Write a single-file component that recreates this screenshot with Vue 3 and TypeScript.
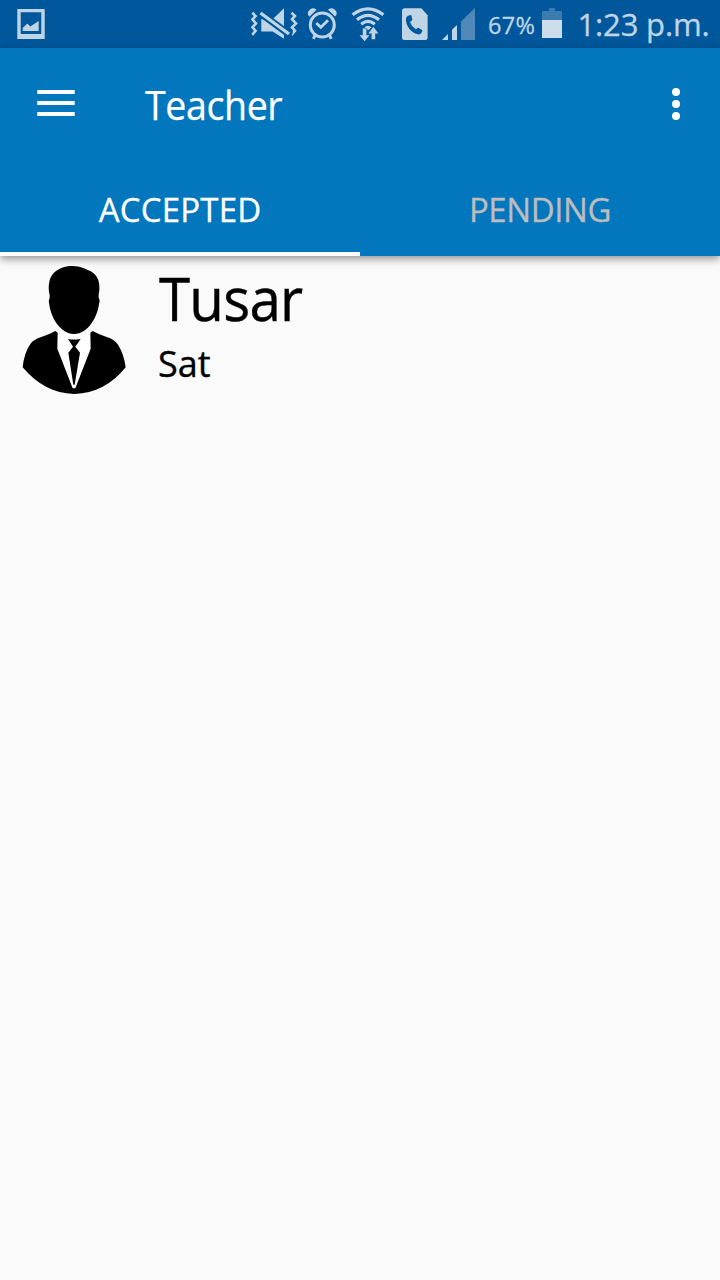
<script setup lang="ts">
import { ref } from 'vue'

interface Teacher {
  name: string
  day: string
}

const tabs: string[] = ['ACCEPTED', 'PENDING']
const active = ref<number>(0)
const teachers: Teacher[] = [{ name: 'Tusar', day: 'Sat' }]
</script>

<template>
  <div class="screen">
    <div class="status">
      <svg class="picture" width="28" height="32" viewBox="17 8 28 32">
        <path class="fg" fill-rule="evenodd" d="M17.3 9H44.7V39H17.3ZM20.7 12.3V34H41.3V12.3Z" />
        <path class="fg" d="M22.7 31V28L27.3 23.5L30.3 26.5L38.7 21V31Z" />
      </svg>
      <div class="indicators">
        <svg width="48" height="48" viewBox="250 0 48 48">
          <path class="zig" d="M252.3 12.8L255.6 16L252.5 19.4L256 23.4L252.5 27.3L255.6 30.8L252.2 34.8" />
          <path class="zig" d="M291.5 12.8L295 16L292 19.2L296 23.4L292 27.3L295 30.8L291.5 34.8" />
          <path class="fg" d="M261.3 19.3H272.6L284 8.3V38.8L272.6 31.5H261.3Z" />
          <path d="M257 10.6L291 35.6" stroke="#01579b" stroke-width="7" />
          <path d="M260.5 13L289 34" stroke="#bfd5e6" stroke-width="3.4" />
        </svg>
        <svg class="alarm" width="34" height="48" viewBox="305 0 34 48">
          <circle cx="322.3" cy="25" r="12" fill="none" stroke="#bfd5e6" stroke-width="3" />
          <path d="M316.2 23L320.8 27.3L328 20.3" fill="none" stroke="#bfd5e6" stroke-width="2.8" />
          <path class="fg" d="M309.6 16.6C305.6 13.6 309.2 8 313.4 8.2Q315.2 8.2 316.6 9.8ZM335 16.6C339 13.6 335.4 8 331.2 8.2Q329.4 8.2 328 9.8Z" />
          <path d="M315.2 35L313.4 38.8M329.4 35L331.2 38.8" stroke="#bfd5e6" stroke-width="3" />
        </svg>
        <svg class="wifi" width="34" height="48" viewBox="351 0 34 48">
          <g fill="none" stroke="#bfd5e6" stroke-width="3.2">
            <path d="M352.6 14.8Q368 2.8 383.4 14.8" />
            <path d="M357 19.8Q368 10.8 379 19.8" />
            <path d="M361.2 24.2Q368 18.6 374.8 24.2" />
          </g>
          <path class="fg" d="M364.5 27.3Q368 24.3 371.5 27.3L368 30.5Z" />
          <path d="M364.5 28.5V36M373.3 31V40" stroke="#01579b" stroke-width="5.6" />
          <path class="fg" d="M362.8 28.6H366.4V35.2H369.5L364.5 41.3L359.6 35.2H362.8ZM371.6 39.2H375.2V33.4H378.4L373.4 26.8L368.4 33.4H371.6Z" />
        </svg>
        <svg class="sim" width="28" height="48" viewBox="401 0 28 48">
          <path class="fg" d="M404.3 8.3H421.4L427.6 15.2V37.5Q427.6 40 425.1 40H404.3Q402 40 402 37.5V10.8Q402 8.3 404.3 8.3Z" />
          <path d="M407.7 16L410.3 15Q411.2 14.9 411.5 16L412.3 19.2Q412.4 20.2 411.6 20.7L410 21.9Q411.5 26.5 415.8 29.3L417.7 28.1Q418.5 27.6 419.3 28.2L422 30Q422.8 30.7 422.2 31.7L420.9 33.6Q420 34.7 417.8 34.3C410.8 32.4 406 26 405.9 19.2Q405.8 17 407.7 16Z" fill="#01579b" />
        </svg>
        <svg class="signal" width="35" height="48" viewBox="441 0 35 48">
          <path class="fg" d="M442 40L448 34V40ZM452 29.8L457 25V40H452Z" />
          <path d="M461 21.6L475 8V40H461Z" fill="#5089b9" />
        </svg>
        <span class="percent">67%</span>
        <svg width="20" height="48" viewBox="542 0 20 48">
          <path d="M549 8H555V11H562V38H542V11H549Z" fill="#3a7caf" />
          <path d="M542 20H562V38H542Z" fill="#cdddeb" />
        </svg>
        <span class="time">1:23 p.m.</span>
      </div>
    </div>

    <header class="header">
      <div class="toolbar">
        <svg class="menu" width="38" height="28" viewBox="0 0 38 28">
          <path d="M0.3 1H37.7V5H0.3ZM0.3 12H37.7V16H0.3ZM0.3 23H37.7V27H0.3Z" fill="#fff" />
        </svg>
        <h1 class="title">Teacher</h1>
        <svg class="more" width="8" height="32" viewBox="0 0 8 32">
          <circle cx="4" cy="4" r="4" /><circle cx="4" cy="16" r="4" /><circle cx="4" cy="28" r="4" />
        </svg>
      </div>
      <nav class="tabs">
        <button
          v-for="(tab, i) in tabs"
          :key="tab"
          class="tab"
          :class="{ active: active === i }"
          @click="active = i"
        >{{ tab }}</button>
      </nav>
    </header>

    <main class="list">
      <div v-for="t in teachers" :key="t.name" class="row">
        <svg class="avatar" width="108" height="132" viewBox="60 42 324 396">
          <path d="M172 246H272L274 296L226 416H218L170 296Z" fill="#fff" />
          <path d="M210 48C240 46 258 57 272 64C292 75 300 94 298 122Q295 132 296 143Q301 150 297 162C292 200 266 251 222 252C180 250 153 202 148 164Q144 152 149 143Q150 135 147 126C144 98 150 76 168 63Q187 49 210 48Z" />
          <path d="M166 243L173 248L172 296L218 415H226L272 296L271 248L278 243Q296 253 320 261Q343 268 353 283Q371 310 377 352C336 402 285 431 223 432C161 431 111 403 68 352Q72 310 91 282Q101 268 124 261Q149 253 166 243Z" />
          <path d="M204 267Q222 270 242 267L226 290L240 308L224 404H220L205 308L219 290Z" />
        </svg>
        <div class="info">
          <div class="name">{{ t.name }}</div>
          <div class="day">{{ t.day }}</div>
        </div>
      </div>
    </main>
  </div>
</template>

<style>
body {
  margin: 0;
  background: #fafafa;
}
</style>

<style scoped>
.screen {
  width: 720px;
  height: 1280px;
  overflow: hidden;
  background: #fafafa;
  font-family: "Open Sans", "Noto Sans", sans-serif;
  color: #000;
}
svg {
  display: block;
  flex: none;
}
.status {
  height: 48px;
  display: flex;
  align-items: center;
  justify-content: space-between;
  background: #01579b;
  color: #bfd5e6;
}
.picture {
  margin-left: 17px;
}
.fg {
  fill: #bfd5e6;
}
.zig {
  fill: none;
  stroke: #bfd5e6;
  stroke-width: 2.6;
}
.indicators {
  width: 470px;
  display: flex;
  align-items: center;
  white-space: nowrap;
}
.alarm {
  margin-left: 7px;
}
.wifi {
  margin-left: 12px;
}
.sim {
  margin-left: 16px;
}
.signal {
  margin-left: 12px;
}
.percent {
  width: 54px;
  margin-left: 12px;
  padding-top: 1px;
  box-sizing: border-box;
  font-size: 23.5px;
  line-height: 48px;
  letter-spacing: 0.3px;
  -webkit-text-stroke: 0.3px currentColor;
}
.time {
  margin-left: 15.5px;
  font-size: 31px;
  line-height: 48px;
  letter-spacing: -0.15px;
  -webkit-text-stroke: 0.3px currentColor;
}
.header {
  position: relative;
  height: 208px;
  background: #0277bd;
  box-shadow: 0 3px 8px rgba(0, 0, 0, 0.42);
  color: #fff;
}
.toolbar {
  height: 112px;
  display: flex;
  align-items: center;
  padding: 0 40px 0 37px;
}
.menu {
  margin-bottom: 2px;
}
.title {
  flex: 1;
  margin: 0 0 0 69.5px;
  padding-top: 3px;
  font-size: 39.5px;
  line-height: 109px;
  font-weight: 400;
  letter-spacing: -0.4px;
  transform: scaleX(0.95);
  transform-origin: left;
  -webkit-text-stroke: 0.25px currentColor;
}
.more {
  fill: #fff;
}
.tabs {
  display: flex;
  height: 96px;
}
.tab {
  flex: 1;
  padding: 7px 0 0;
  border: 0;
  border-bottom: 4px solid transparent;
  background: none;
  color: #bdbdbd;
  font-family: inherit;
  font-size: 33px;
  line-height: 85px;
  letter-spacing: -0.4px;
  -webkit-text-stroke: 0.3px currentColor;
}
.tab.active {
  color: #fff;
  border-bottom-color: #fff;
  letter-spacing: 0.2px;
}
.row {
  display: flex;
  padding: 8px 20px;
}
.info {
  margin-left: 30px;
  padding-top: 1px;
}
.name {
  font-size: 59.5px;
  line-height: 66px;
  letter-spacing: -0.8px;
  transform: translateX(1px) scaleX(0.95);
  transform-origin: left;
  -webkit-text-stroke: 0.4px currentColor;
}
.day {
  padding-top: 1px;
  font-size: 36px;
  line-height: 64px;
  -webkit-text-stroke: 0.4px currentColor;
}
</style>
